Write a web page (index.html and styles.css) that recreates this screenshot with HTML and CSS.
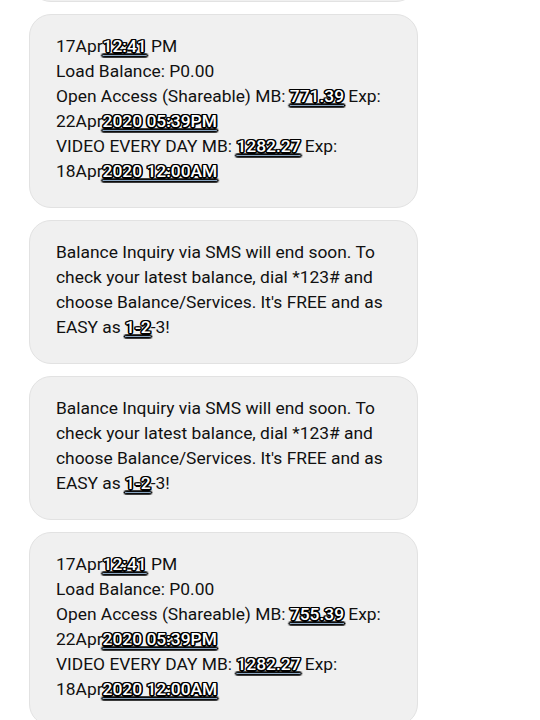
FILE: index.html
```html
<!DOCTYPE html>
<html>
<head>
<meta charset="utf-8">
<link rel="stylesheet" href="styles.css">
</head>
<body>
<div class="list">
  <div class="bubble prev"></div>
  <div class="bubble">17Apr<span class="lnk">12:41</span> PM<br>Load Balance: P0.00<br>Open Access (Shareable) MB: <span class="lnk">771.39</span> Exp: 22Apr<span class="lnk">2020 05:39PM</span><br>VIDEO EVERY DAY MB: <span class="lnk">1282.27</span> Exp: 18Apr<span class="lnk">2020 12:00AM</span></div>
  <div class="bubble">Balance Inquiry via SMS will end soon. To check your latest balance, dial *123# and choose Balance/Services. It's FREE and as EASY as <span class="lnk">1-2</span>-3!</div>
  <div class="bubble">Balance Inquiry via SMS will end soon. To check your latest balance, dial *123# and choose Balance/Services. It's FREE and as EASY as <span class="lnk">1-2</span>-3!</div>
  <div class="bubble">17Apr<span class="lnk">12:41</span> PM<br>Load Balance: P0.00<br>Open Access (Shareable) MB: <span class="lnk">755.39</span> Exp: 22Apr<span class="lnk">2020 05:39PM</span><br>VIDEO EVERY DAY MB: <span class="lnk">1282.27</span> Exp: 18Apr<span class="lnk">2020 12:00AM</span></div>
</div>
</body>
</html>
```
FILE: styles.css
```css
html, body {
  margin: 0;
  padding: 0;
  background: #ffffff;
}
body {
  width: 540px;
  height: 720px;
  overflow: hidden;
  font-family: Roboto, "Noto Sans", sans-serif;
}
.list {
  display: flex;
  flex-direction: column;
  gap: 12px;
  padding-left: 29px;
  margin-top: -98px;
}
.bubble {
  width: 389px;
  box-sizing: border-box;
  background: #f0f0f0;
  border: 1px solid #e2e2e2;
  border-radius: 22px;
  padding: 19px 22px 23px 26px;
  font-size: 17.4px;
  line-height: 25px;
  color: #111111;
}
.prev {
  height: 100px;
  padding: 0;
}
.lnk {
  color: #ffffff;
  font-weight: 500;
  text-shadow: -1.3px -1.3px 0 #000, 1.3px -1.3px 0 #000, -1.3px 1.3px 0 #000, 1.3px 1.3px 0 #000,
    0 -1.5px 0 #000, 0 1.5px 0 #000, -1.5px 0 0 #000, 1.5px 0 0 #000;
  text-decoration: underline;
  text-decoration-color: #8aa6c2;
  text-underline-offset: 3px;
}
```
